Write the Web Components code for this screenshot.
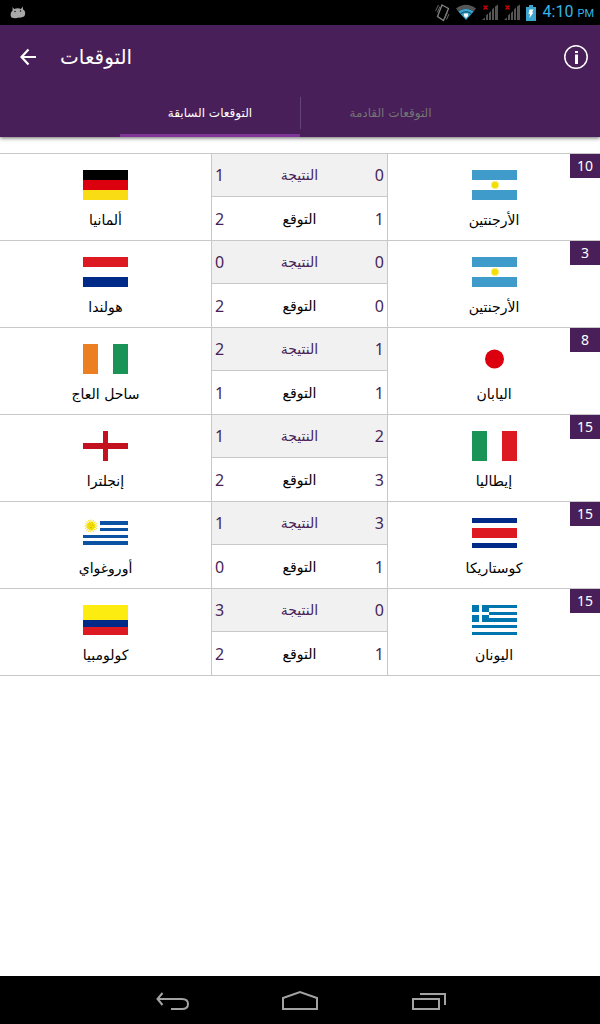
<!DOCTYPE html>
<html lang="ar">
<head>
<meta charset="utf-8">
<meta name="viewport" content="width=device-width, initial-scale=1">
<title>التوقعات</title>
<style>
  :root {
    --purple: #481f58;
    --accent: #7f3598;
    --line: #c8c8c8;
    --arabic: "DejaVu Sans", sans-serif;
    --digits: "Noto Sans", sans-serif;
  }
  body {
    margin: 0;
    min-height: 100vh;
    display: flex;
    flex-direction: column;
    background: #fff;
    font-family: var(--arabic);
  }
  match-list { flex: 1; }
</style>
</head>
<body>
<status-bar></status-bar>
<app-header heading="التوقعات">
  <tab-item selected>التوقعات السابقة</tab-item>
  <tab-item>التوقعات القادمة</tab-item>
</app-header>
<match-list>
  <match-row points="10" result="1-0" guess="2-1"><team-card slot="left" flag="de">ألمانيا</team-card><team-card slot="right" flag="ar">الأرجنتين</team-card></match-row>
  <match-row points="3" result="0-0" guess="2-0"><team-card slot="left" flag="nl">هولندا</team-card><team-card slot="right" flag="ar">الأرجنتين</team-card></match-row>
  <match-row points="8" result="2-1" guess="1-1"><team-card slot="left" flag="ci">ساحل العاج</team-card><team-card slot="right" flag="jp">اليابان</team-card></match-row>
  <match-row points="15" result="1-2" guess="2-3"><team-card slot="left" flag="en">إنجلترا</team-card><team-card slot="right" flag="it">إيطاليا</team-card></match-row>
  <match-row points="15" result="1-3" guess="0-1"><team-card slot="left" flag="uy">أوروغواي</team-card><team-card slot="right" flag="cr">كوستاريكا</team-card></match-row>
  <match-row points="15" result="3-0" guess="2-1"><team-card slot="left" flag="co">كولومبيا</team-card><team-card slot="right" flag="gr">اليونان</team-card></match-row>
</match-list>
<nav-bar></nav-bar>

<script>
  const define = (name, render) => customElements.define(name, class extends HTMLElement {
    constructor() {
      super();
      this.attachShadow({ mode: 'open' });
    }
    connectedCallback() {
      this.shadowRoot.innerHTML = render(this);
    }
  });

  define('status-bar', () => `
    <style>
      :host { display: flex; align-items: center; justify-content: space-between; height: 25px; padding: 0 6px 0 10px; background: #000; color: #33b5e5; font-family: Roboto, sans-serif; }
      .icons { display: flex; align-items: center; gap: 6px; }
      svg { display: block; }
      time { display: flex; align-items: baseline; gap: 4px; font-size: 16px; line-height: 24px; white-space: nowrap; }
      small { font-size: 11px; }
    </style>
    <svg width="16" height="14" viewBox="0 0 16 14" aria-hidden="true">
      <path d="M2.500 1 4 3Q8 1.400 11 3L12.600.6l.5 2.800C16 5 15.500 9 14 10.500q-3 1.500-5 1-4 1.500-7.500 0C0 9 .5 6.500 2.600 4.500z" fill="#a8a8a8"/>
      <circle cx="5" cy="5.500" r=".7"/><circle cx="10.500" cy="5" r=".7"/>
    </svg>
    <div class="icons">
      <svg width="104" height="20" viewBox="434 2 104 20" aria-hidden="true">
        <path d="m443 4 6.500 3.500L444.500 19.500l-6-4z" fill="none" stroke="#858585" stroke-width="1.300"/>
        <path d="m436.500 10 3-6m-1.200 7.500 2.700-6M445.500 18l2.800-6M447.500 18.500l2.500-5.500" fill="none" stroke="#666" stroke-width="1"/>
        <path d="M457 7.500q10-7.500 20 0l-2.300 2.900q-7.700-5.500-15.400 0z" fill="#555"/>
        <path d="M459.300 10.400q7.700-5.500 15.400 0L467 19z" fill="#3aa5cf"/>
        <path d="M461.500 12.800q5.500-4 11 0" fill="none" stroke="#0b4157"/>
        <path d="M465 12.500h4v2.500l-2 2-2-2z" fill="#fff"/>
        <g id="signal">
          <path d="M483 19l3-2.500V19zm4 0v-4.500l2-2V19zm3 0v-7l2-2v9zm3 0V8.500l2-2V19zm3 0V5.500l3-2V19z" fill="#555"/>
          <path d="m484.500 4.500 4 4m0-4-4 4" stroke="#d00008" stroke-width="1.200"/>
        </g>
        <use href="#signal" x="22"/>
        <path d="M527 6h3V4h4v2h3v14h-10z" fill="#3aa5cf"/>
        <path d="M530.500 8.500h4L533 11.500h1.500L530.500 17l.5-4h-1.500z" fill="#fff"/>
      </svg>
      <time>4:10 <small>PM</small></time>
    </div>`);

  define('app-header', el => `
    <style>
      :host { display: block; position: relative; background: var(--purple); color: #fff; box-shadow: 0 1px 4px rgba(0,0,0,.6); }
      .bar { display: flex; align-items: center; height: 64px; padding: 0 12px 0 16px; }
      button { display: block; padding: 0; border: 0; background: none; color: inherit; cursor: pointer; }
      svg { display: block; }
      h1 { flex: 1; margin: 0 0 0 20px; font-size: 20px; line-height: 28px; font-weight: 400; }
      .tabs { display: flex; width: 60%; height: 48px; margin: 0 auto; }
    </style>
    <div class="bar">
      <button aria-label="رجوع"><svg width="24" height="24" viewBox="0 0 24 24"><path d="M12.500 4.500 5.500 12l7 7.500M5.500 12H20" fill="none" stroke="#fff" stroke-width="2.200"/></svg></button>
      <h1><bdi dir="rtl">${el.getAttribute('heading')}</bdi></h1>
      <button aria-label="معلومات"><svg width="24" height="24" viewBox="0 0 24 24"><circle cx="12" cy="12" r="11.200" fill="none" stroke="#fff" stroke-width="1.500"/><path d="M11 6h3v2h-3zM11 9.500h3V19h-3z" fill="#fff"/></svg></button>
    </div>
    <div class="tabs" role="tablist"><slot></slot></div>`);

  define('tab-item', el => `
    <style>
      :host { flex: 1; display: flex; position: relative; }
      button { flex: 1; padding: 3px 0 0; border: 0; border-bottom: 3px solid transparent; background: none; color: #747474; font: 12px/20px var(--arabic); cursor: pointer; }
      :host([selected]) button { color: #fff; border-color: var(--accent); }
      :host(:not([selected]))::before { content: ""; width: 1px; height: 32px; margin-top: 8px; background: #66427a; }
    </style>
    <button role="tab" dir="rtl" aria-selected="${el.hasAttribute('selected')}"><slot></slot></button>`);

  define('match-list', () => `
    <style>
      :host { display: block; padding-top: 16px; }
      .rows { border-top: 1px solid var(--line); }
    </style>
    <div class="rows"><slot></slot></div>`);

  define('match-row', el => {
    const line = (name, label) => {
      const [left, right] = el.getAttribute(name).split('-');
      return `<tr class="${name}"><td>${left}</td><th scope="row" dir="rtl">${label}</th><td>${right}</td></tr>`;
    };
    return `
    <style>
      :host { display: grid; grid-template-columns: 53fr 44fr 53fr; border-bottom: 1px solid var(--line); }
      table { border-collapse: separate; border-spacing: 0; width: 100%; height: 86px; border-right: 1px solid var(--line); box-sizing: border-box; }
      td, th { height: 42px; padding: 0; box-sizing: content-box; }
      td { width: 24px; padding: 0 3px; color: var(--purple); font: 16px/22px var(--digits); text-align: left; }
      td:last-child { text-align: right; }
      th { font: 14px/20px var(--arabic); text-align: center; }
      .result > * { background: #f1f1f1; border-bottom: 1px solid var(--line); }
      .result th { color: var(--purple); }
      .guess > * { height: 43px; }
      .left { border-right: 1px solid var(--line); }
      .right { position: relative; }
      .points { position: absolute; top: 0; right: 0; width: 30px; background: var(--purple); color: #fff; font: 14px/24px var(--digits); text-align: center; }
    </style>
    <div class="left"><slot name="left"></slot></div>
    <table>${line('result', 'النتيجة')}${line('guess', 'التوقع')}</table>
    <div class="right"><slot name="right"></slot><span class="points">${el.getAttribute('points')}</span></div>`;
  });

  const band = (x, y, w, h, fill) => `<rect x="${x}" y="${y}" width="${w}" height="${h}" fill="${fill}"/>`;
  const rays = (cx, cy, r) => Array.from({ length: 8 }, (_, i) => {
    const a = i * Math.PI / 8, x = Math.cos(a) * r, y = Math.sin(a) * r;
    return `<path d="M${cx - x} ${cy - y}L${cx + x} ${cy + y}" stroke="#f5df1b" stroke-width="1"/>`;
  }).join('');
  const flags = {
    de: band(0, 0, 45, 10, '#000') + band(0, 10, 45, 10, '#dc000f') + band(0, 20, 45, 10, '#f9dc14'),
    ar: band(0, 0, 45, 10, '#3f9cca') + band(0, 20, 45, 10, '#3f9cca') + rays(23, 15, 4) + '<circle cx="23" cy="15" r="3" fill="#f2de00"/>',
    nl: band(0, 0, 45, 10, '#dd1a21') + band(0, 20, 45, 10, '#002a87'),
    ci: band(0, 0, 15, 30, '#ec7f22') + band(30, 0, 15, 30, '#1a9356'),
    jp: '<circle cx="22.500" cy="15" r="9.500" fill="#dc000f"/>',
    en: band(0, 12, 45, 6, '#c4111f') + band(20, 0, 5, 30, '#c4111f'),
    it: band(0, 0, 15, 30, '#1a9356') + band(30, 0, 15, 30, '#dd1a21'),
    uy: band(17, 3, 28, 4, '#0b52a3') + band(17, 10, 28, 3, '#0b52a3') + band(0, 17, 45, 3, '#0b52a3') + band(0, 23, 45, 4, '#0b52a3') + rays(8, 8, 6.500) + '<circle cx="8" cy="8" r="4" fill="#f2de00"/><path d="M6.500 7h1m1.500 0h1M7 9.500h2" stroke="#c2ad10" stroke-width=".7"/>',
    cr: band(0, 0, 45, 5, '#002a87') + band(0, 10, 45, 10, '#dd1a21') + band(0, 25, 45, 5, '#002a87'),
    co: band(0, 0, 45, 15, '#fdec10') + band(0, 15, 45, 7, '#002a87') + band(0, 22, 45, 8, '#dd1a21'),
    gr: band(0, 0, 7, 7, '#0075ae') + band(10, 0, 7, 7, '#0075ae') + band(0, 10, 7, 7, '#0075ae') + band(10, 10, 7, 7, '#0075ae') + band(17, 0, 28, 3, '#0075ae') + band(17, 7, 28, 3, '#0075ae') + band(17, 13, 28, 4, '#0075ae') + band(0, 20, 45, 3, '#0075ae') + band(0, 27, 45, 3, '#0075ae')
  };

  define('team-card', el => `
    <style>
      :host { display: flex; flex-direction: column; align-items: center; gap: 10px; padding: 16px 0 10px; font: 14px/20px var(--arabic); color: #000; }
      svg { display: block; }
    </style>
    <svg width="45" height="30" viewBox="0 0 45 30" aria-hidden="true">${flags[el.getAttribute('flag')]}</svg>
    <bdi dir="rtl"><slot></slot></bdi>`);

  define('nav-bar', () => `
    <style>
      :host { display: flex; justify-content: center; align-items: center; gap: 48px; height: 48px; background: #000; }
      button { display: block; width: 80px; height: 48px; padding: 0; border: 0; background: none; cursor: pointer; }
      svg { display: block; margin: 0 auto; fill: none; stroke: #a3a3a3; stroke-width: 2; }
    </style>
    <button aria-label="رجوع"><svg width="36" height="24" viewBox="0 0 36 24"><path d="M8.500 5 3.500 11l5 6M3.500 11H28q6 0 6 5t-6 5H17"/></svg></button>
    <button aria-label="الرئيسية"><svg width="36" height="24" viewBox="0 0 36 24"><path d="M1 21V10l17-6 17 6v11z"/></svg></button>
    <button aria-label="التطبيقات الأخيرة"><svg width="36" height="24" viewBox="0 0 36 24"><path d="M3 11h26v10H3zM10 6h25v11"/></svg></button>`);
</script>
</body>
</html>
